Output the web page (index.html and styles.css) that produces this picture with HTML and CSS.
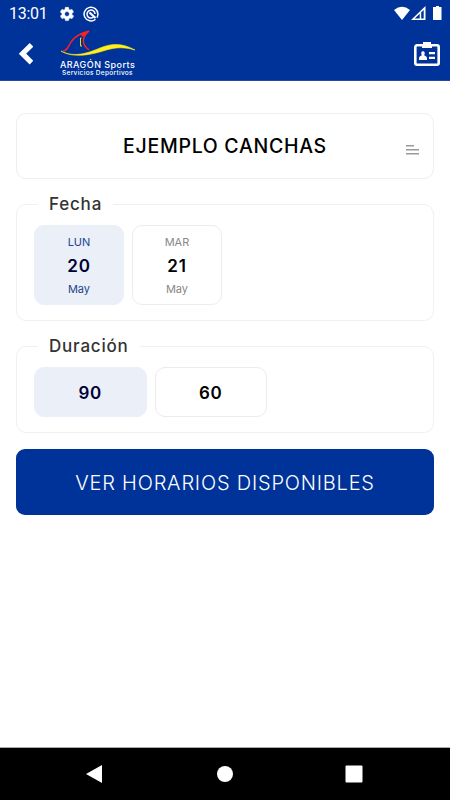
FILE: index.html
```html
<!DOCTYPE html>
<html lang="es">
<head>
    <meta charset="UTF-8">
    <meta name="viewport" content="width=device-width, initial-scale=1">
    <title>Aragón Sports</title>
    <link rel="stylesheet" href="styles.css">
</head>
<body>
    <!-- Cabecera -->
    <header class="top">
        <div class="status">
            <span class="clock">13:01</span>
            <svg class="gear" width="16" height="16" viewBox="0 0 24 24"><path fill="#fff" stroke="#fff" stroke-width=".8" d="M19.4 13a7.500 7.500 0 0 0 0-2l2.100-1.600c.2-.2.300-.4.100-.7l-2-3.400c-.1-.2-.4-.3-.6-.2l-2.500 1a7 7 0 0 0-1.700-1l-.4-2.600a.5.5 0 0 0-.5-.5h-4a.5.5 0 0 0-.5.4L9 5.100a7 7 0 0 0-1.700 1l-2.500-1c-.2-.1-.5 0-.6.2l-2 3.400c-.1.2-.1.500.1.700L4.500 11a7 7 0 0 0 0 2l-2.100 1.600c-.2.2-.3.400-.1.700l2 3.400c.1.200.4.300.6.200l2.500-1a7 7 0 0 0 1.700 1l.4 2.600c0 .2.200.4.500.4h4c.2 0 .5-.2.500-.4l.4-2.600a7 7 0 0 0 1.700-1l2.500 1c.2.100.5 0 .6-.2l2-3.400c.1-.2.100-.5-.1-.7zM12 15.600a3.600 3.600 0 1 1 0-7.200 3.600 3.600 0 0 1 0 7.200z"/></svg>
            <svg class="radar" width="16" height="16" viewBox="0 0 16 16" fill="none" stroke="#fff"><path stroke-width="1.500" d="M12.500 13.300A6.900 6.900 0 1 1 14.900 8c0 1.500-.3 2.600-.9 3.600"/><path stroke-width="1.500" d="M10.500 11.200A4 4 0 1 1 12 8"/><path stroke-width="2.200" d="M6.500 6.500l6 5.500"/></svg>
            <svg class="signal" width="50" height="16" viewBox="0 0 50 16" fill="#fff"><path d="M0 4Q8-2.500 16 4L8 14z"/><path fill-rule="evenodd" d="M31.500 0v14H17zM25.700 7.700L20.700 12.600h5zM27.200 6.300v6.300h2.500V3.900z"/><path d="M41 1h1V0h3v1h2.500v13H39V1z"/></svg>
        </div>
        <nav class="bar">
            <svg class="back" width="16" height="24" viewBox="0 0 16 24"><path d="M14.500 2.800L5.500 11.700l9 8.900" fill="none" stroke="#fff" stroke-width="5.200"/></svg>
            <div class="logo">
                <svg width="76" height="28" viewBox="0 0 76 28"><path d="M1 21C14 28 28 23 40 18S62 13 75 20C61 16 53 18 43 21S14 29 1 21z" fill="#ffef1a" stroke="#ffef1a" stroke-width=".6"/><path d="M3 21C7 21 8 17 11 12 15 6 21 3 29 1 22 7 21 14 29 20" fill="none" stroke="#f22" stroke-width="1.400"/><path d="M20 4l9-3-6 6z" fill="#f22"/><path d="M21.500 8h-1v8h1.500" fill="none" stroke="#ffef1a" stroke-width=".9"/></svg>
                <b class="name">ARAGÓN Sports</b>
                <span class="sub">Servicios Deportivos</span>
            </div>
            <svg class="card-id" width="26" height="24" viewBox="0 0 26 24"><rect x="1.300" y="3.300" width="23.400" height="19.400" rx="1.700" fill="none" stroke="#fff" stroke-width="2.600"/><path fill="#fff" d="M9 0h8v2h1v4H8V2h1zM5 18v-2c0-1.700 2-2.200 2.800-2.800-2.500-5.200 4.900-5.200 2.400 0C11 13.800 13 14.300 13 16v2zM15 10h6v2.200h-6zM15 14.800h6V17h-6z"/></svg>
        </nav>
    </header>

    <!-- Reserva -->
    <main class="booking">
        <div class="court">
            <span class="court-name">EJEMPLO CANCHAS</span>
            <svg class="lines" width="13" height="10" viewBox="0 0 13 10" fill="#999"><path d="M0 0h8v1.600H0zM0 4h13v1.600H0zM0 8h13v1.600H0z"/></svg>
        </div>

        <fieldset class="box">
            <legend>Fecha</legend>
            <div class="options">
                <div class="day on"><span class="week">LUN</span><b>20</b><span class="month">May</span></div>
                <div class="day"><span class="week">MAR</span><b>21</b><span class="month">May</span></div>
            </div>
        </fieldset>

        <fieldset class="box">
            <legend>Duración</legend>
            <div class="options">
                <div class="time on"><b>90</b></div>
                <div class="time"><b>60</b></div>
            </div>
        </fieldset>

        <button class="send" type="button">VER HORARIOS DISPONIBLES</button>
    </main>

    <!-- Botones del sistema -->
    <footer class="system">
        <svg width="18" height="20" viewBox="0 0 18 20"><path d="M16 1v18L0 10z" fill="#fff"/></svg>
        <svg width="18" height="20" viewBox="0 0 18 20"><circle cx="9" cy="10" r="8" fill="#fff"/></svg>
        <svg width="18" height="20" viewBox="0 0 18 20"><rect x=".5" y="1.500" width="17" height="17" rx="1" fill="#fff"/></svg>
    </footer>
</body>
</html>
```
FILE: styles.css
```css
* {
    box-sizing: border-box;
}

body {
    display: flex;
    flex-direction: column;
    height: 100vh;
    margin: 0;
    background: #fff;
    font-family: Inter, "Liberation Sans", sans-serif;
    color: #000;
}

svg {
    display: block;
    flex: none;
}

/* Cabecera */
.top {
    height: 81px;
    background: #003399;
    border-bottom: 1px solid #24479f;
    color: #fff;
}

.status {
    display: flex;
    align-items: center;
    height: 27px;
    padding: 0 6px 0 9px;
}

.clock {
    width: 50px;
    font: 16px/27px Roboto, sans-serif;
    letter-spacing: -.3px;
}

.radar {
    margin-left: 8px;
}

.signal {
    margin-left: auto;
}

.bar {
    display: flex;
    align-items: flex-start;
    padding: 0 10px 0 17px;
}

.back {
    margin-top: 15px;
}

.logo {
    width: 76px;
    margin: 3px 0 0 27px;
    white-space: nowrap;
}

.name,
.sub {
    display: block;
}

.name {
    margin-top: 1px;
    font-size: 9px;
    font-weight: 500;
    line-height: 11px;
    letter-spacing: .45px;
}

.sub {
    margin: -1px 0 0 2px;
    font-size: 6.5px;
    font-weight: 500;
    line-height: 8px;
    letter-spacing: .32px;
}

.card-id {
    margin: 15px 0 0 auto;
}

/* Reserva */
.booking {
    flex: 1;
    padding: 32px 16px 0;
}

.court {
    position: relative;
    display: flex;
    align-items: center;
    justify-content: center;
    height: 66px;
    border: 1px solid #eee;
    border-radius: 10px;
}

.court-name {
    font-size: 19.5px;
    font-weight: 500;
    letter-spacing: .7px;
}

.lines {
    position: absolute;
    top: 31px;
    right: 14px;
}

.box {
    height: 130px;
    margin: 12px 0 0;
    padding: 0 17px;
    border: 1px solid #f0f0f0;
    border-radius: 10px;
}

.box + .box {
    height: 100px;
}

.box legend {
    height: 26px;
    margin-left: 4px;
    padding: 0 11px;
    font-size: 17px;
    font-weight: 500;
    line-height: 26px;
    letter-spacing: .8px;
    color: #333;
}

.options {
    display: flex;
    gap: 8px;
    margin-top: 8px;
}

.day,
.time {
    display: flex;
    flex-direction: column;
    align-items: center;
    border: 1px solid #ececec;
    border-radius: 10px;
}

.day {
    width: 90px;
    height: 80px;
    padding-top: 9px;
    font-size: 11px;
    line-height: 14px;
    color: #888;
}

.day b,
.time b {
    font-size: 17px;
    font-weight: 600;
    letter-spacing: .8px;
    color: #000;
}

.day b {
    padding-top: 1px;
    line-height: 32px;
}

.time {
    justify-content: center;
    width: 112.500px;
    height: 50px;
}

.time b {
    padding-top: 1px;
}

.on {
    border-color: #eaeff8;
    background: #eaeff8;
    color: #244589;
}

.on b {
    color: #000033;
}

.send {
    display: block;
    width: 100%;
    height: 66px;
    margin-top: 16px;
    padding: 1px 0 0;
    border: 0;
    border-radius: 9px;
    background: #003399;
    font-family: inherit;
    font-size: 20px;
    font-weight: 300;
    letter-spacing: .8px;
    color: #fff;
}

/* Botones del sistema */
.system {
    display: flex;
    align-items: center;
    justify-content: space-between;
    height: 53px;
    padding: 0 87px 0 86px;
    border-top: 1px solid #aaa;
    background: #000;
}
```
